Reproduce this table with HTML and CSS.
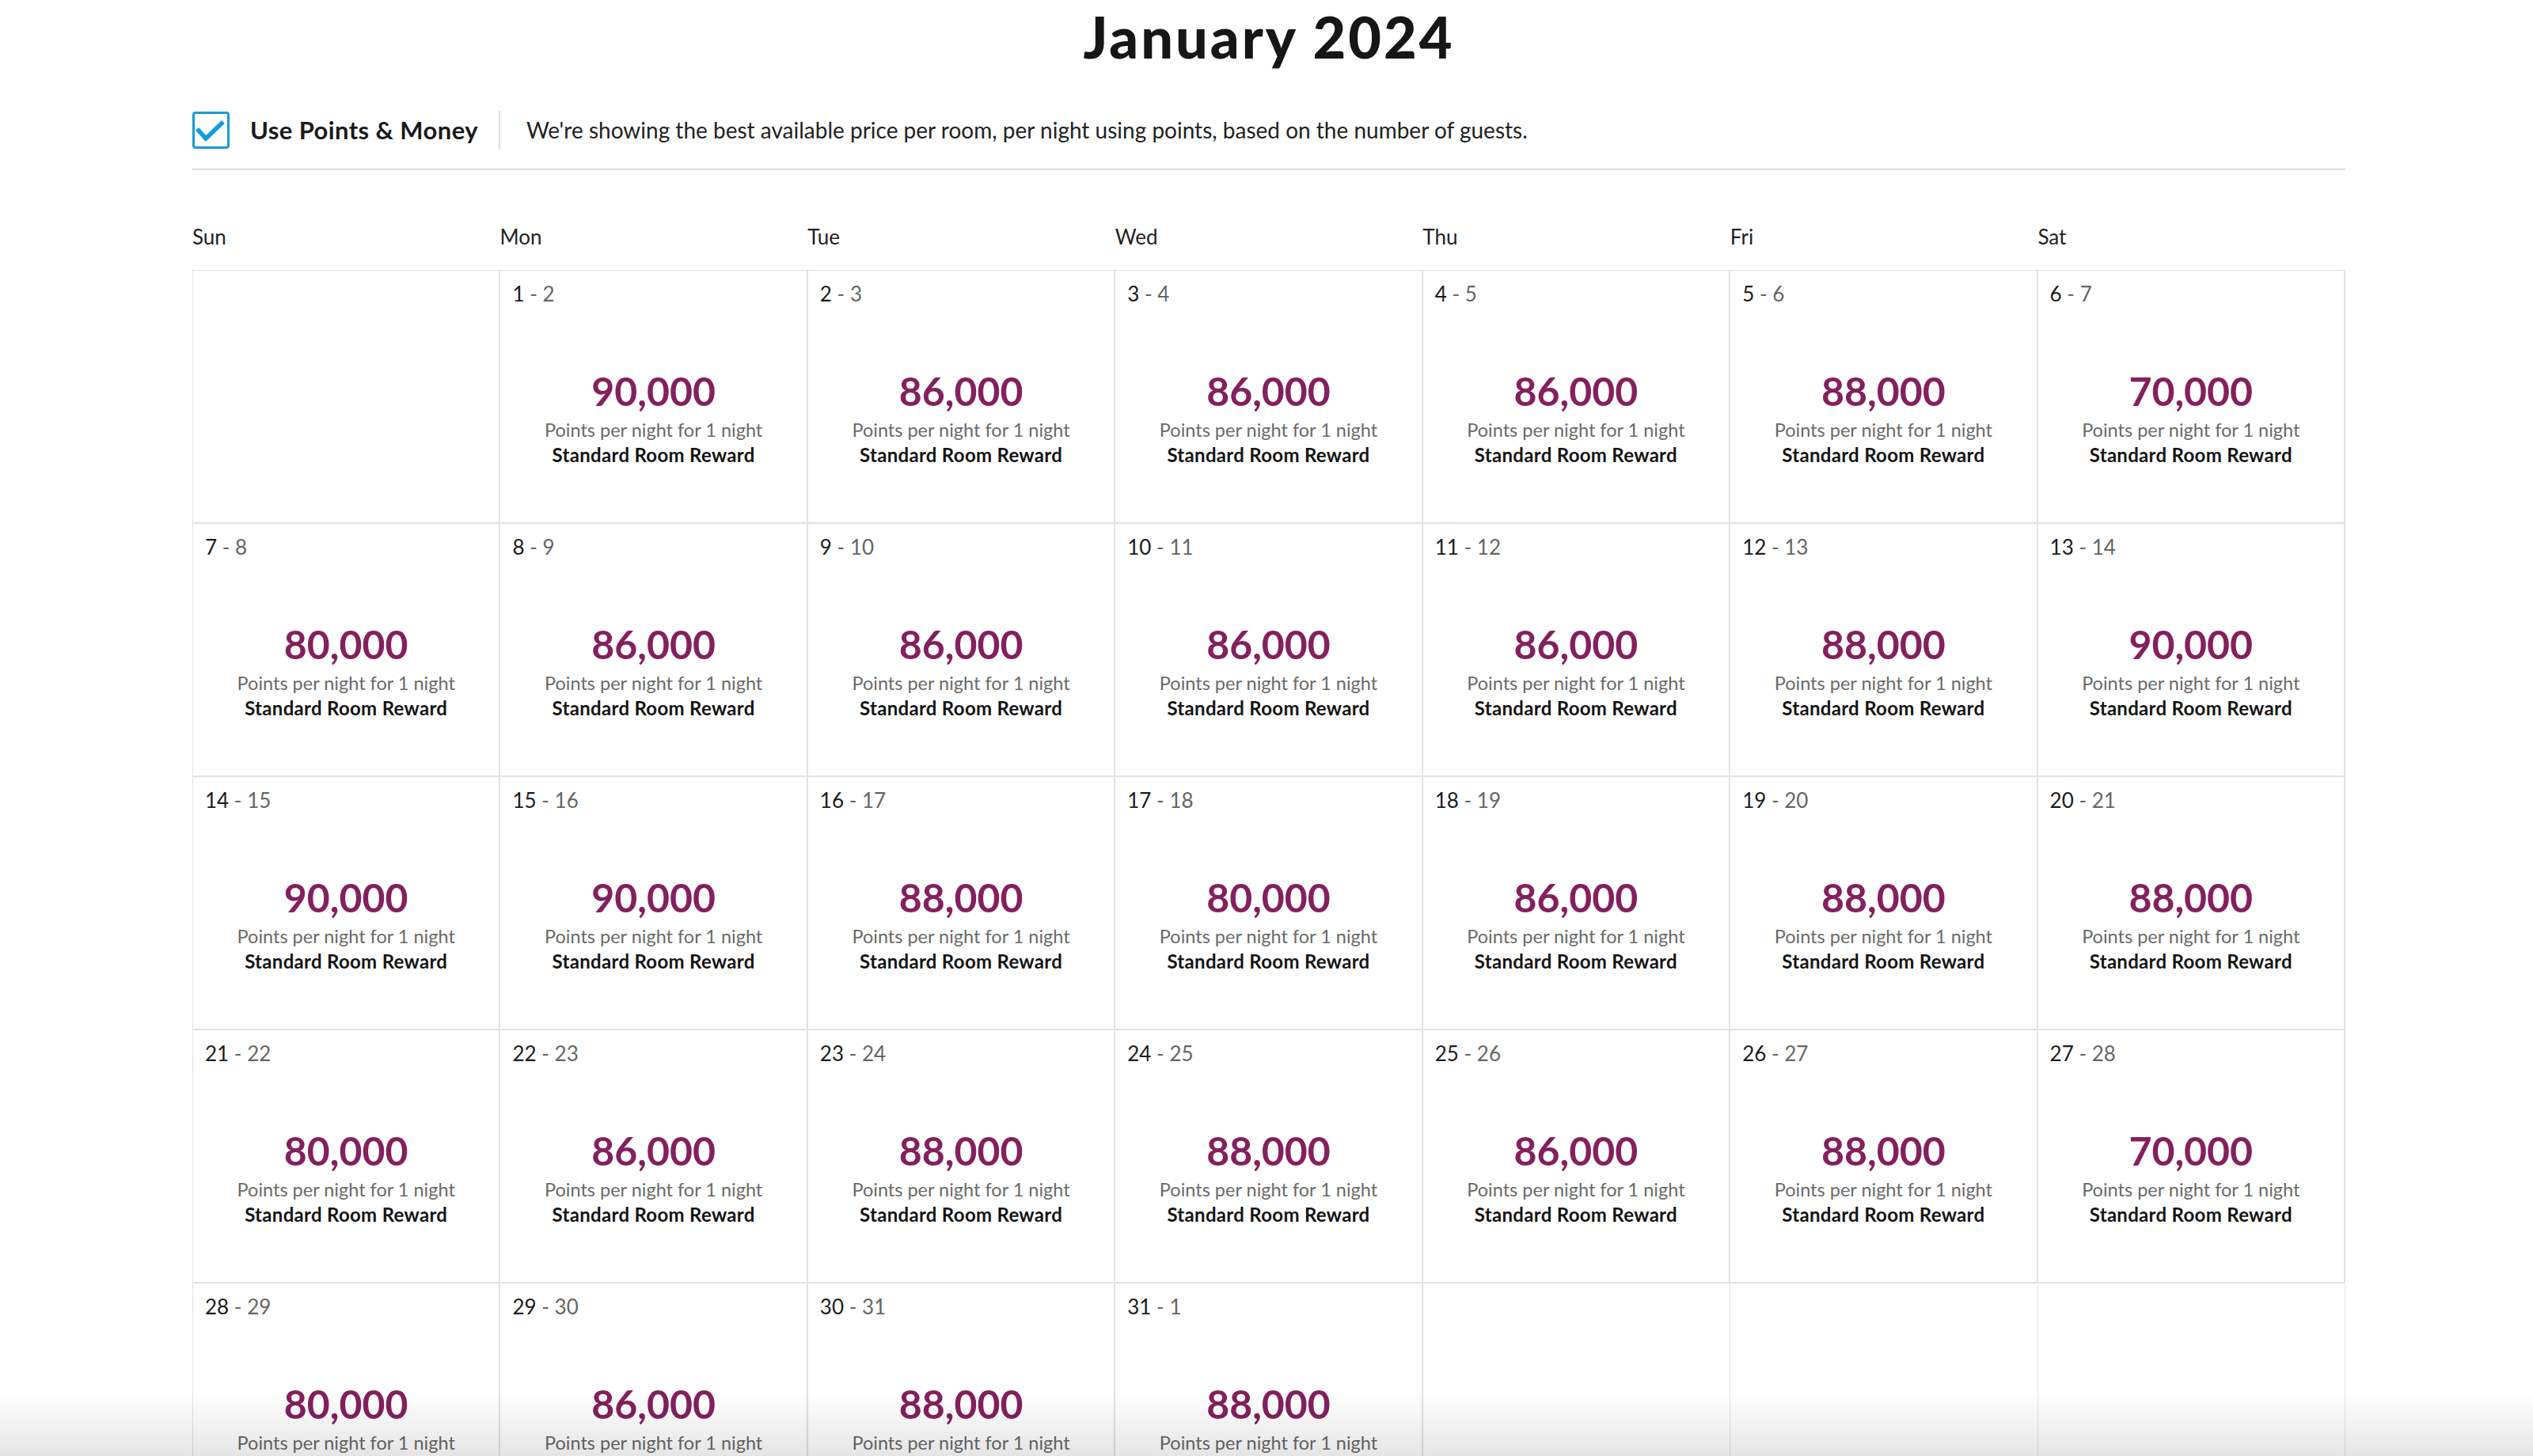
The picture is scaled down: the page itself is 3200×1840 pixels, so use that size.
FILE: index.html
```html
<!DOCTYPE html>
<html lang="en">
<head>
  <meta charset="UTF-8">
  <title>Points Calendar</title>
  <link rel="stylesheet" href="styles.css">
</head>
<body>

  <div class="page">
    <h1 class="month-title">January 2024</h1>

    <!-- Points & Money toggle -->
    <div class="toolbar">
      <span class="checkbox">
        <svg viewBox="0 0 47 47" width="47" height="47">
          <polyline points="8,24 17,34 37,15" fill="none" stroke="#0e9be0" stroke-width="5.5" stroke-linecap="square"/>
        </svg>
      </span>
      <span class="toolbar-label">Use Points &amp; Money</span>
      <span class="toolbar-divider"></span>
      <span class="toolbar-note">We're showing the best available price per room, per night using points, based on the number of guests.</span>
    </div>

    <div class="weekdays">
      <div>Sun</div>
      <div>Mon</div>
      <div>Tue</div>
      <div>Wed</div>
      <div>Thu</div>
      <div>Fri</div>
      <div>Sat</div>
    </div>

    <div class="calendar" id="calendar"></div>
  </div>

  <div class="bottom-fade"></div>

  <script>
    // points price per night, starting Monday Jan 1
    const prices = [
      "90,000", "86,000", "86,000", "86,000", "88,000", "70,000",
      "80,000", "86,000", "86,000", "86,000", "86,000", "88,000", "90,000",
      "90,000", "90,000", "88,000", "80,000", "86,000", "88,000", "88,000",
      "80,000", "86,000", "88,000", "88,000", "86,000", "88,000", "70,000",
      "80,000", "86,000", "88,000", "88,000"
    ];

    const calendar = document.getElementById("calendar");

    const blank = document.createElement("div");
    blank.className = "day";
    calendar.appendChild(blank);

    prices.forEach((price, i) => {
      const from = i + 1;
      const to = from === 31 ? 1 : from + 1;
      const cell = document.createElement("div");
      cell.className = "day";
      cell.innerHTML =
        '<div class="day-date">' + from + ' <span class="day-to">- ' + to + '</span></div>' +
        '<div class="day-price">' + price + '</div>' +
        '<div class="day-unit">Points per night for 1 night</div>' +
        '<div class="day-type">Standard Room Reward</div>';
      calendar.appendChild(cell);
    });

    for (let i = 0; i < 3; i++) {
      const tail = document.createElement("div");
      tail.className = "day day-tail";
      calendar.appendChild(tail);
    }
  </script>

</body>
</html>
```

FILE: styles.css
```css
body {
  margin: 0;
  padding-left: 6px;
  font-family: Lato, "Noto Sans", sans-serif;
  background-color: #fff;
  color: #1c1c1c;
}

.page {
  width: 2720px;
  margin: 0 auto;
}

.month-title {
  margin: 0;
  padding-top: 7px;
  font-size: 72px;
  line-height: 78px;
  font-weight: 900;
  letter-spacing: 3px;
  text-align: center;
  color: #161616;
}

/* Points & Money */
.toolbar {
  display: flex;
  align-items: center;
  margin-top: 55px;
  padding-bottom: 25px;
  border-bottom: 2px solid #dedede;
}

.checkbox {
  width: 47px;
  height: 47px;
  box-sizing: border-box;
  border: 3px solid #1a9ad6;
  border-radius: 4px;
  display: flex;
  align-items: center;
  justify-content: center;
}

.checkbox svg {
  display: block;
  flex: none;
}

.toolbar-label {
  margin-left: 26px;
  font-size: 31px;
  font-weight: 700;
  letter-spacing: 0.4px;
  color: #1a1a1a;
}

.toolbar-divider {
  width: 2px;
  height: 48px;
  margin: 0 33px 0 26px;
  background-color: #dcdcdc;
}

.toolbar-note {
  font-size: 28px;
  color: #222;
}

.weekdays {
  display: grid;
  grid-template-columns: repeat(7, 1fr);
  padding: 68px 0 26px;
  font-size: 26px;
  line-height: 32px;
  color: #222;
}

.calendar {
  display: grid;
  grid-template-columns: repeat(7, 1fr);
  grid-auto-rows: 320px;
  border-top: 1px solid #e2e2e2;
  border-left: 1px solid #e2e2e2;
}

.day {
  border-right: 2px solid #e2e2e2;
  border-bottom: 2px solid #e2e2e2;
  border-top: 1px solid #e2e2e2;
  margin-top: -1px;
  padding: 13px 15px 0;
  text-align: center;
}

.day-tail {
  border-right: 1px solid #e4e4e4;
  border-bottom: none;
  border-top: none;
  margin-top: 1px;
}

.day-date {
  text-align: left;
  font-size: 26px;
  line-height: 32px;
  color: #1c1c1c;
}

.day-to {
  color: #666;
}

.day-price {
  margin-top: 79px;
  font-size: 50px;
  line-height: 56px;
  font-weight: 700;
  color: #84205e;
}

.day-unit {
  margin-top: 5px;
  font-size: 23.5px;
  line-height: 32px;
  color: #6a6a6a;
}

.day-type {
  font-size: 24px;
  line-height: 31px;
  font-weight: 700;
  letter-spacing: 0.3px;
  color: #141414;
}

.bottom-fade {
  position: fixed;
  left: 0;
  right: 0;
  bottom: 0;
  height: 82px;
  background: linear-gradient(to bottom, rgba(0, 0, 0, 0), rgba(0, 0, 0, 0.1));
  pointer-events: none;
}
```
